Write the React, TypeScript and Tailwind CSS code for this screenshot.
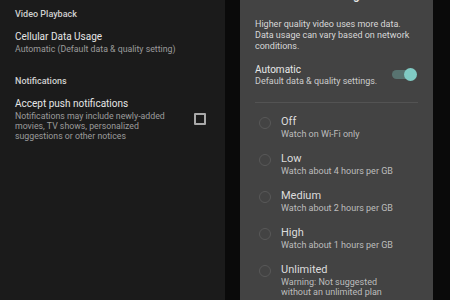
import React from "react";

const options = [
  { label: "Off", sub: ["Watch on Wi-Fi only"] },
  { label: "Low", sub: ["Watch about 4 hours per GB"] },
  { label: "Medium", sub: ["Watch about 2 hours per GB"] },
  { label: "High", sub: ["Watch about 1 hours per GB"] },
  { label: "Unlimited", sub: ["Warning: Not suggested", "without an unlimited plan"] },
];

function Settings() {
  return (
    <div className="w-[225px] shrink-0 h-full bg-[#1b1b1b] px-[15px]">
      <div className="pt-[8px] text-[9px] leading-[12px] font-medium text-[#d0d0d0]">Video Playback</div>
      <div className="mt-[9.5px] text-[10px] leading-[13px] text-[#e6e6e6]">Cellular Data Usage</div>
      <div className="mt-[1px] text-[8.75px] leading-[11px] text-[#9c9c9c]">
        Automatic (Default data &amp; quality setting)
      </div>
      <div className="mt-[20.5px] text-[9px] leading-[12px] font-medium text-[#d0d0d0]">Notifications</div>
      <div className="mt-[9.5px] flex items-start">
        <div className="flex-1">
          <div className="text-[10px] leading-[13px] text-[#e6e6e6]">Accept push notifications</div>
          <div className="mt-[1.5px] text-[8.75px] leading-[10px] text-[#9c9c9c] whitespace-nowrap">
            Notifications may include newly-added
            <br />
            movies, TV shows, personalized
            <br />
            suggestions or other notices
          </div>
        </div>
        <div className="w-[12px] h-[12px] border-2 border-[#a9a9a9] rounded-[1px] mr-[4px] mt-[16.5px]" />
      </div>
    </div>
  );
}

function DataDialog() {
  return (
    <div className="ml-[15px] w-[193px] h-full bg-[#434343] px-[15px] overflow-hidden">
      <div className="-mt-[13px] pl-[6px] text-[12px] leading-[16px] font-medium text-[#e6e6e6] whitespace-nowrap">
        Cellular Data Usage
      </div>
      <div className="mt-[15.5px] text-[9px] leading-[11px] text-[#d8d8d8]">
        Higher quality video uses more data.
        <br />
        Data usage can vary based on network
        <br />
        conditions.
      </div>
      <div className="mt-[11px] flex items-center">
        <div className="flex-1">
          <div className="text-[10px] leading-[13px] text-[#e8e8e8]">Automatic</div>
          <div className="text-[9px] leading-[11px] text-[#cccccc]">Default data &amp; quality settings.</div>
        </div>
        <div className="relative w-[25px] h-[13px] mr-[1px]">
          <div className="absolute left-0 right-[2px] top-[2px] h-[9px] rounded-full bg-[#587370]" />
          <div className="absolute right-0 top-0 w-[13px] h-[13px] rounded-full bg-[#80cbc4]" />
        </div>
      </div>
      <div className="mt-[15px] h-px bg-[#535353]" />
      <div className="mt-[12px] flex flex-col gap-[12px]">
        {options.map((o) => (
          <div key={o.label} className="flex items-start">
            <div className="w-[12px] h-[12px] rounded-full border-[1.5px] border-[#585858] ml-[4px] mt-[2.5px] shrink-0" />
            <div className="ml-[10px]">
              <div className="text-[11px] leading-[13px] text-[#dcdcdc]">{o.label}</div>
              <div className="text-[9px] leading-[11px] mt-[1px] text-[#bdbdbd] whitespace-nowrap">
                {o.sub.map((s, i) => (
                  <div key={i} className={i > 0 ? "-mt-[1px]" : ""}>{s}</div>
                ))}
              </div>
            </div>
          </div>
        ))}
      </div>
    </div>
  );
}

export default function App() {
  return (
    <div
      className="w-[450px] h-[300px] flex bg-[#0a0a0a] overflow-hidden"
      style={{ fontFamily: "Roboto, 'Noto Sans', sans-serif" }}
    >
      <Settings />
      <DataDialog />
    </div>
  );
}
